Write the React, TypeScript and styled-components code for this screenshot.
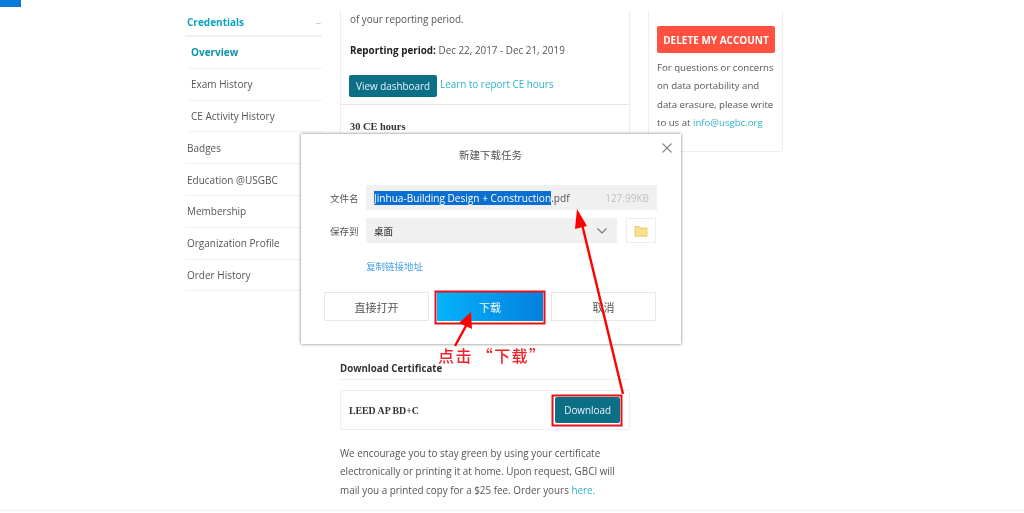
import React from "react";
import styled, { createGlobalStyle } from "styled-components";

const GlobalStyle = createGlobalStyle`
  html, body {
    margin: 0;
    padding: 0;
    background: #fff;
  }
  body {
    font-family: "Open Sans", "Noto Sans CJK SC", sans-serif;
    color: #555;
  }
`;

const Page = styled.div`
  position: relative;
  width: 1024px;
  height: 513px;
  overflow: hidden;
  background: #fff;
  box-sizing: border-box;
  filter: blur(0.3px);
`;

const TopMark = styled.div`
  width: 21px;
  height: 7px;
  background: #0a7ad8;
`;

const Columns = styled.div`
  display: grid;
  grid-template-columns: 137px 290px 135px;
  column-gap: 18px;
  margin-left: 185px;
  align-items: start;
  padding-top: 2px;
`;

const Sidebar = styled.nav`
  display: flex;
  flex-direction: column;
`;

const NavHead = styled.div`
  display: flex;
  justify-content: space-between;
  align-items: center;
  height: 26px;
  padding: 0 0 0 2px;
  font-size: 10px;
  font-weight: 700;
  color: #0ca3bd;
  border-bottom: 2px solid #f1f1f1;
  span {
    color: #bbb;
    font-weight: 400;
    margin-right: 1px;
  }
`;

const NavItem = styled.a<{ $sub?: boolean; $active?: boolean }>`
  display: flex;
  align-items: center;
  height: 30.8px;
  margin-left: ${(p) => (p.$sub ? "4px" : "0")};
  padding-left: 2px;
  font-size: 10px;
  font-weight: ${(p) => (p.$active ? 700 : 400)};
  color: ${(p) => (p.$active ? "#0a93ad" : "#555")};
  border-bottom: 1px solid #f1f1f1;
`;

const MainColumn = styled.main`
  display: flex;
  flex-direction: column;
  margin-top: 2px;
`;

const Panel = styled.section`
  border-left: 1px solid #eee;
  border-right: 1px solid #eee;
  height: 122px;
  overflow: hidden;
`;

const PanelTop = styled.div`
  padding: 1px 9px 0;
  height: 92px;
  border-bottom: 1px solid #e6e6e6;
  font-size: 9.9px;
  color: #555;
`;

const PlainLine = styled.p<{ $mb?: number }>`
  margin: 0 0 ${(p) => p.$mb ?? 0}px;
  line-height: 15px;
  white-space: nowrap;
  b {
    font-weight: 700;
    color: #222;
  }
`;

const ButtonRow = styled.div`
  display: flex;
  align-items: flex-start;
  gap: 3px;
  margin-top: 17px;
  margin-left: -1px;
`;

const TealButton = styled.button<{ $tall?: boolean }>`
  height: ${(p) => (p.$tall ? "26px" : "22px")};
  padding: 0 ${(p) => (p.$tall ? "9px" : "7px")};
  border: 0;
  border-radius: 2px;
  background: #0b6f85;
  color: #eef;
  font: 400 9.9px "Open Sans", sans-serif;
  white-space: nowrap;
`;

const TextLink = styled.a`
  color: #2bb5c9;
`;

const ReportLink = styled(TextLink)`
  margin-top: 2px;
`;

const HoursTitle = styled.div`
  padding: 16px 9px 0;
  font: 700 10.4px "Liberation Serif", serif;
  color: #333;
`;

const LowerBlock = styled.section`
  margin-top: 229px;
`;

const SectionTitle = styled.div`
  height: 17px;
  font-size: 9.7px;
  font-weight: 700;
  color: #333;
  border-bottom: 1px solid #eee;
  margin-bottom: 10px;
`;

const CertCard = styled.div`
  display: flex;
  align-items: center;
  justify-content: space-between;
  height: 40px;
  box-sizing: border-box;
  border: 1px solid #eee;
  border-radius: 2px;
  padding: 0 9px 0 8px;
  font: 700 9.8px "Liberation Serif", serif;
  color: #333;
`;

const Body = styled.p`
  margin: 14px 0 0;
  font-size: 9.9px;
  line-height: 18.3px;
  color: #555;
  white-space: nowrap;
`;

const SideCard = styled.aside`
  height: 141px;
  padding: 15px 8px 0;
  margin-top: 2px;
  box-sizing: border-box;
  border: 1px solid #eee;
  border-top: 0;
  border-radius: 0 0 2px 2px;
  font-size: 9.65px;
  line-height: 18.3px;
  color: #555;
  white-space: nowrap;
`;

const DeleteButton = styled.button`
  display: block;
  width: 118px;
  height: 27px;
  padding: 0;
  margin-bottom: 6px;
  border: 0;
  border-radius: 2px;
  background: #ff5040;
  color: #fff;
  font: 700 10px "Open Sans", sans-serif;
`;

const FooterRule = styled.div`
  position: absolute;
  left: 0;
  right: 0;
  top: 510px;
  height: 1px;
  background: #efefef;
`;

const Dialog = styled.div`
  position: absolute;
  left: 301px;
  top: 134px;
  width: 380px;
  height: 210px;
  box-sizing: border-box;
  padding: 0 24px 0 23px;
  background: #fff;
  box-shadow: 0 0 3px rgba(0, 0, 0, 0.55);
  font-family: "Noto Sans CJK SC", sans-serif;
  color: #555;
`;

const DialogTitle = styled.div`
  height: 42px;
  margin-bottom: 9px;
  line-height: 42px;
  text-align: center;
  font-size: 10.5px;
  color: #555;
`;

const CloseButton = styled.button`
  position: absolute;
  right: 7px;
  top: 7px;
  width: 14px;
  height: 14px;
  padding: 0;
  border: 0;
  background: none;
  display: flex;
`;

const FormRow = styled.div`
  display: flex;
  align-items: center;
  gap: 7px;
  height: 25px;
  margin-bottom: 8px;
`;

const FieldLabel = styled.label`
  width: 29px;
  margin-left: 6px;
  font-size: 9.5px;
  color: #555;
  white-space: nowrap;
`;

const NameField = styled.div`
  flex: 1;
  display: flex;
  align-items: center;
  height: 25px;
  padding: 0 8px;
  background: #f0f0f0;
  font: 400 10.1px "Open Sans", sans-serif;
  color: #555;
  white-space: nowrap;
  mark {
    background: #0a6fd0;
    color: #fff;
  }
  small {
    margin-left: auto;
    font-size: 10px;
    color: #c0c0c0;
  }
`;

const SelectField = styled.div`
  width: 251px;
  display: flex;
  align-items: center;
  justify-content: space-between;
  height: 25px;
  padding: 0 9px 0 8px;
  box-sizing: border-box;
  background: #f0f0f0;
  font-size: 9.5px;
  font-weight: 500;
  color: #444;
`;

const FolderButton = styled.div`
  width: 30px;
  height: 25px;
  box-sizing: border-box;
  margin-left: 2px;
  border: 1px solid #eee;
  display: flex;
  align-items: center;
  justify-content: center;
`;

const CopyLink = styled.a`
  display: block;
  margin: 16px 0 0 42px;
  font-size: 9.5px;
  line-height: 14px;
  color: #4aa3e8;
`;

const ActionRow = styled.div`
  display: flex;
  gap: 8px;
  margin: 19px 1px 0 0;
`;

const ActionButton = styled.button<{ $primary?: boolean }>`
  flex: ${(p) => (p.$primary ? "0 0 106px" : "1")};
  height: 29px;
  padding: 0;
  border: ${(p) => (p.$primary ? "0" : "1px solid #e8e8e8")};
  background: ${(p) => (p.$primary ? "linear-gradient(90deg, #04b3fb, #0580dd)" : "#fff")};
  color: ${(p) => (p.$primary ? "#f4fbff" : "#555")};
  font: 400 11px "Noto Sans CJK SC", sans-serif;
`;

const Annotation = styled.div`
  position: absolute;
  left: 438px;
  top: 344px;
  font: 500 16px/22px "Noto Sans CJK SC", sans-serif;
  letter-spacing: 1.4px;
  word-spacing: -1px;
  color: #f0222a;
  white-space: nowrap;
`;

const Markup = styled.svg`
  position: absolute;
  left: 0;
  top: 0;
  pointer-events: none;
`;

export default function App() {
  return (
    <>
      <GlobalStyle />
      <Page>
        <TopMark />
        <Columns>
          <Sidebar>
            <NavHead>
              Credentials <span>–</span>
            </NavHead>
            <NavItem $sub $active>Overview</NavItem>
            <NavItem $sub>Exam History</NavItem>
            <NavItem $sub>CE Activity History</NavItem>
            <NavItem>Badges</NavItem>
            <NavItem>Education @USGBC</NavItem>
            <NavItem>Membership</NavItem>
            <NavItem>Organization Profile</NavItem>
            <NavItem>Order History</NavItem>
          </Sidebar>
          <MainColumn>
            <Panel>
              <PanelTop>
                <PlainLine $mb={16}>of your reporting period.</PlainLine>
                <PlainLine>
                  <b>Reporting period:</b> Dec 22, 2017 - Dec 21, 2019
                </PlainLine>
                <ButtonRow>
                  <TealButton>View dashboard</TealButton>
                  <ReportLink>Learn to report CE hours</ReportLink>
                </ButtonRow>
              </PanelTop>
              <HoursTitle>30 CE hours</HoursTitle>
            </Panel>
            <LowerBlock>
              <SectionTitle>Download Certificate</SectionTitle>
              <CertCard>
                LEED AP BD+C
                <TealButton $tall>Download</TealButton>
              </CertCard>
              <Body>
                We encourage you to stay green by using your certificate
                <br />
                electronically or printing it at home. Upon request, GBCI will
                <br />
                mail you a printed copy for a $25 fee. Order yours <TextLink>here.</TextLink>
              </Body>
            </LowerBlock>
          </MainColumn>
          <SideCard>
            <DeleteButton>DELETE MY ACCOUNT</DeleteButton>
            For questions or concerns
            <br />
            on data portability and
            <br />
            data erasure, please write
            <br />
            to us at <TextLink>info@usgbc.org</TextLink>
          </SideCard>
        </Columns>
        <FooterRule />
        <Dialog>
          <DialogTitle>新建下载任务</DialogTitle>
          <CloseButton aria-label="关闭">
            <svg width="14" height="14" viewBox="0 0 14 14">
              <path d="M2.5 2.5l9 9M11.5 2.5l-9 9" stroke="#888" strokeWidth="1.1" fill="none" />
            </svg>
          </CloseButton>
          <FormRow>
            <FieldLabel>文件名</FieldLabel>
            <NameField>
              <mark>Jinhua-Building Design + Construction</mark>.pdf
              <small>127.99KB</small>
            </NameField>
          </FormRow>
          <FormRow>
            <FieldLabel>保存到</FieldLabel>
            <SelectField>
              桌面
              <svg width="12" height="8" viewBox="0 0 12 8">
                <path d="M1.5 1.5L6 6l4.5-4.5" stroke="#777" strokeWidth="1.1" fill="none" />
              </svg>
            </SelectField>
            <FolderButton>
              <svg width="14" height="12" viewBox="0 0 14 12">
                <path d="M1 1.5h4.5l1.2 1.5H13v8.2H1z" fill="#fbe08f" stroke="#e8c25c" strokeWidth="0.8" />
              </svg>
            </FolderButton>
          </FormRow>
          <CopyLink>复制链接地址</CopyLink>
          <ActionRow>
            <ActionButton>直接打开</ActionButton>
            <ActionButton $primary>下载</ActionButton>
            <ActionButton>取消</ActionButton>
          </ActionRow>
        </Dialog>
        <Annotation>点击 “下载”</Annotation>
        <Markup width="1024" height="513" viewBox="0 0 1024 513">
          <rect x="435.5" y="291.5" width="109" height="32" fill="none" stroke="#e3131b" strokeWidth="2" />
          <rect x="552.5" y="395.5" width="69" height="30" fill="none" stroke="#e3131b" strokeWidth="2" />
          <path d="M455 346L467 324" stroke="#f00" strokeWidth="2.4" />
          <path d="M471 312l1 17-13-6z" fill="#f00" />
          <path d="M623 394L581 220" stroke="#f00" strokeWidth="2.4" />
          <path d="M577 209l10 17-12 3z" fill="#f00" />
        </Markup>
      </Page>
    </>
  );
}
